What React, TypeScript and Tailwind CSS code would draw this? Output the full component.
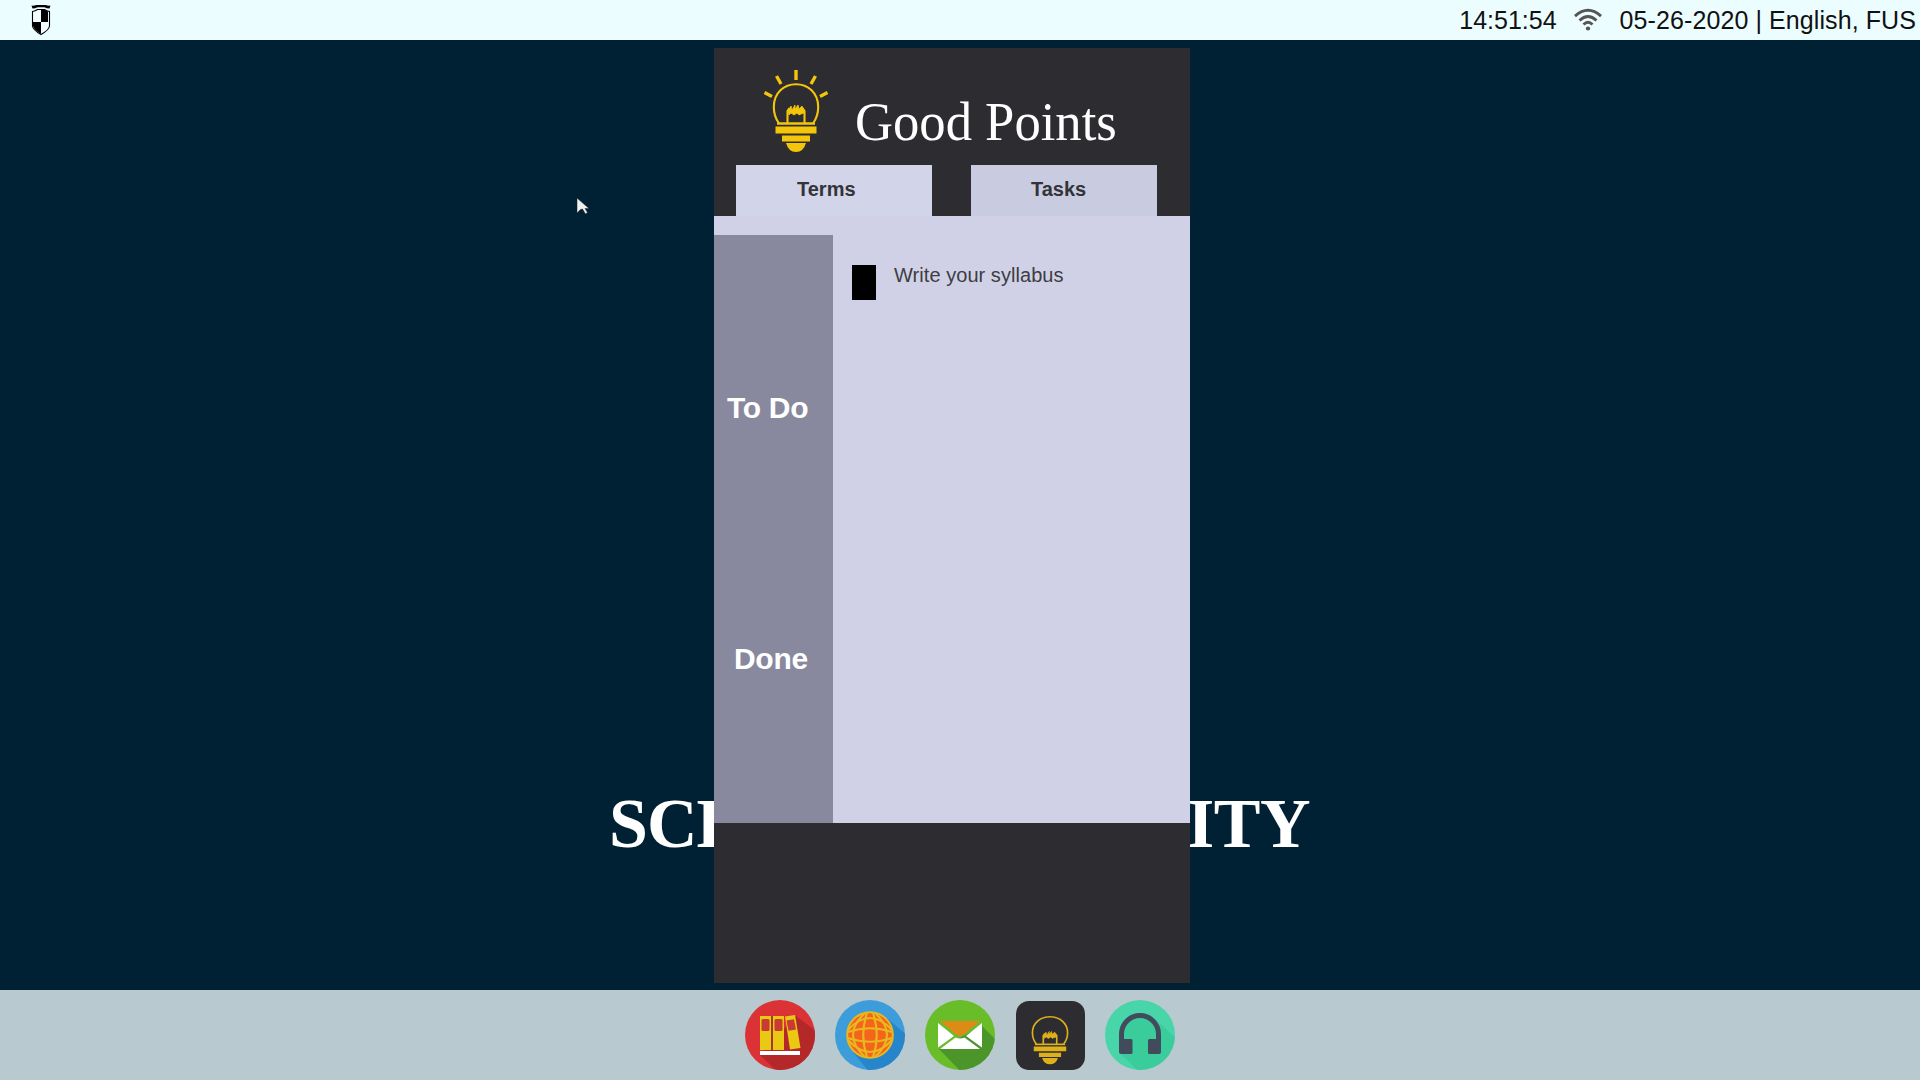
import React from "react";

function Shield() {
  return (
    <svg width="22" height="32" viewBox="0 0 22 32">
      <path d="M1.500 1.500q2 .500 5-.500h9q3 1 5 .500l-1 3q-3 0-5-1.200h-7Q5.500 4.500 2.500 4.500z" fill="#000" />
      <path d="M2.500 7.500q3-.500 5-2h7q2 1.500 5 2V22q-.500 4-8.500 8.500Q3 26 2.500 22z" fill="#f4fdff" stroke="#000" strokeWidth="1.100" />
      <path d="M11 5.500h3.500q2 1.500 3.500 2V18h-7zM3 18h8v12Q4 26 3 22z" fill="#000" />
    </svg>
  );
}

function Wifi() {
  return (
    <svg width="28" height="24" viewBox="0 0 28 24" fill="none" stroke="#555" strokeWidth="2.900">
      <path d="M1 8.200Q14-3.500 27 8.200" />
      <path d="M5.500 12.500Q14 4.500 22.500 12.500" />
      <path d="M9.500 16.500Q14 12 18.500 16.500" />
      <ellipse cx="14" cy="20.500" rx="2.200" ry="2" fill="#555" stroke="none" />
    </svg>
  );
}

/* Bulb drawn in a 66x84 box; the rays are optional. */
function Bulb({ rays, className, color }: { rays?: boolean; className: string; color: string }) {
  return (
    <svg className={className} viewBox={rays ? "0 0 66 84" : "9 14 48 70"} preserveAspectRatio="none" fill="none" stroke={color} strokeWidth="2.100">
      {rays && (
        <path d="M33 1v10M13.500 7l4.500 8M52.500 7l-4.500 8M1.500 23.500l7.500 4M64.500 23.500l-7.500 4" strokeWidth="3.400" />
      )}
      <path d="M16 54.500C12 49 10.800 44 10.800 38C10.800 24 21 15.200 33 15.200S55.200 24 55.200 38C55.200 44 54 49 50 54.500" />
      <path d="M14 54.500h38" strokeWidth="2.400" />
      <path d="M24.500 54V42l2-3M41.500 54V42l-2-3" />
      <path d="M25 42l3-5 1 4 3-5 0 4 3-4 1 4 3-3 2 5v2l-3 1-2 1-2-2-3 2-3-2-2 2z" fill={color} strokeWidth="0.800" />
      <path d="M12.500 57.500h41v7h-41zM19 66.500h28v6H19zM23 74h20q-2.500 9-10 9t-10-9z" fill={color} stroke="none" />
    </svg>
  );
}

function BooksIcon() {
  return (
    <svg className="size-[70px]" viewBox="0 0 70 70">
      <clipPath id="books"><circle cx="35" cy="35" r="35" /></clipPath>
      <circle cx="35" cy="35" r="35" fill="#db3335" />
      <path d="M51 16l24 18v40H35L15 55z" fill="#b4282a" clipPath="url(#books)" />
      <path d="M15 16h11v34H15zM28 16h11v34H28z" fill="#e9c914" />
      <path d="M40 16.500l10-1.500 5.500 33-10.500 1.500z" fill="#e9c914" />
      <path d="M26 16h2v34h-2z" fill="#a8362a" />
      <g fill="#c93a30">
        <rect x="16.500" y="19" width="8" height="12" rx="1.500" />
        <rect x="29.500" y="19" width="8" height="12" rx="1.500" />
        <path d="M41.500 20.500l7.500-1.300 2 10.300-7.500 1.200z" />
      </g>
      <rect x="15" y="51" width="40" height="4" fill="#fff" />
    </svg>
  );
}

function GlobeIcon() {
  return (
    <svg className="size-[70px]" viewBox="0 0 70 70">
      <clipPath id="globe"><circle cx="35" cy="35" r="35" /></clipPath>
      <circle cx="35" cy="35" r="35" fill="#3d9cda" />
      <path d="M52 18l23 20v40H39L18 52z" fill="#2785cb" clipPath="url(#globe)" />
      <g fill="none" stroke="#e8b81e" strokeWidth="2.100">
        <circle cx="35" cy="35" r="22.800" fill="#f4641c" />
        <path d="M32 13Q24.500 35 32 57M38 13Q45.500 35 38 57" />
        <path d="M13 32Q35 24.500 57 32M13 38Q35 45.500 57 38" />
        <path d="M30 13Q6 35 30 57M40 13Q64 35 40 57" />
        <path d="M13 30Q35 6 57 30M13 40Q35 64 57 40" />
      </g>
    </svg>
  );
}

function MailIcon() {
  return (
    <svg className="size-[70px]" viewBox="0 0 70 70">
      <clipPath id="mail"><circle cx="35" cy="35" r="35" /></clipPath>
      <circle cx="35" cy="35" r="35" fill="#69bd29" />
      <path d="M57 26l20 20v32H42L14 49z" fill="#4b952a" clipPath="url(#mail)" />
      <path d="M15 21h40L39 34.500q-4 2.500-8 0z" fill="#dd8b16" />
      <path d="M13 23l16 13-16 11.500zM57 23L41 36l16 11.500zM15 49l15.500-11.500q4.500 2 9 0L55 49z" fill="#fff" />
    </svg>
  );
}

function HeadphonesIcon() {
  return (
    <svg className="size-[70px]" viewBox="0 0 70 70">
      <clipPath id="phones"><circle cx="35" cy="35" r="35" /></clipPath>
      <circle cx="35" cy="35" r="35" fill="#49d5aa" />
      <path d="M51 20l24 22v36H40L16 54V34q4-17 19-18z" fill="#3bcc9b" clipPath="url(#phones)" />
      <path d="M16.500 51V34a18.500 18.500 0 0137 0v17" fill="none" stroke="#414b5c" strokeWidth="5" />
      <path d="M14 39h12q1.500 0 1.500 1.500v12q0 1.500-1.500 1.500H16q-2 0-2-2zM56 39H44.500q-1.500 0-1.500 1.500v12q0 1.500 1.500 1.500H54q2 0 2-2z" fill="#414b5c" />
    </svg>
  );
}

export default function App() {
  return (
    <div className="flex h-[1080px] w-[1920px] flex-col overflow-hidden bg-[#002033] font-['Liberation_Sans',sans-serif]">
      <header className="flex h-10 shrink-0 items-center bg-[#ecfdff] pl-[30px] text-[25px] leading-10 text-[#111]">
        <Shield />
        <div className="ml-auto flex items-center whitespace-nowrap pr-[4px]">
          <span>14:51:54</span>
          <span className="ml-[17px] mr-[18px]"><Wifi /></span>
          <span className="tracking-[0.09px]">05-26-2020 | English, FUS</span>
        </div>
      </header>

      <main className="relative flex-1">
        <div className="absolute left-[609px] top-[744px] flex w-[701px] justify-between font-['Liberation_Serif',serif] text-[70px] font-bold leading-[80px] text-white">
          <span className="tracking-[-1px]">SCH</span>
          <span className="tracking-[-0.5px]">ITY</span>
        </div>

        <svg className="absolute left-[577px] top-[157px]" width="12" height="18" viewBox="0 0 12 18">
          <path d="M0 1v15l3.500-3.500 2-.500 3 5 2-1.500-2.500-4H12z" fill="#f0f0f0" stroke="#222" strokeWidth="0.500" />
        </svg>

        <section className="absolute left-[714px] top-2 flex h-[935px] w-[476px] flex-col bg-[#2d2c31]">
          <div className="flex h-[117px] items-start pl-[49px] pt-[21px]">
            <Bulb rays className="h-[84px] w-[66px]" color="#f3c50b" />
            <h1 className="ml-[26px] mt-[20px] origin-left scale-x-[0.957] whitespace-nowrap font-['Liberation_Serif',serif] text-[55px] leading-[66px] text-white">
              Good Points
            </h1>
          </div>
          <nav className="flex h-[51px] pl-[22px] text-xl font-bold text-[#333338]">
            <div className="w-[196px] bg-[#d2d4ea] pl-[61px] pt-[10px]">Terms</div>
            <div className="ml-[39px] w-[186px] bg-[#c9cce0] pl-[60px] pt-[10px]">Tasks</div>
          </nav>
          <div className="flex h-[607px] flex-col bg-[#d0d1e7] pt-[19px]">
            <div className="flex flex-1">
              <aside className="w-[119px] bg-[#88899e] text-[30px] font-bold leading-9 text-white">
                <div className="pl-[13px] pt-[155px] tracking-[-0.3px]">To Do</div>
                <div className="pl-[20px] pt-[215px] tracking-[-0.3px]">Done</div>
              </aside>
              <div className="flex items-start pl-[19px] pt-[30px]">
                <div className="h-[35px] w-6 bg-black" />
                <span className="ml-[18px] mt-[-4px] text-xl tracking-[0.05px] text-[#3d3d42]">Write your syllabus</span>
              </div>
            </div>
          </div>
        </section>
      </main>

      <footer className="flex h-[90px] shrink-0 items-center justify-center gap-5 bg-[#b8cacf]">
        <BooksIcon />
        <GlobeIcon />
        <MailIcon />
        <div className="flex size-[70px] items-center justify-center">
          <div className="flex size-[69px] items-end justify-center rounded-[13px] bg-[#2d2c31] pb-[5px]">
            <Bulb className="h-[49px] w-[38px]" color="#deb01a" />
          </div>
        </div>
        <HeadphonesIcon />
      </footer>
    </div>
  );
}
